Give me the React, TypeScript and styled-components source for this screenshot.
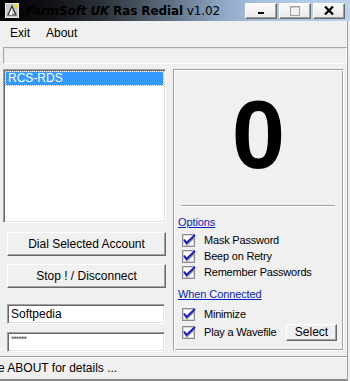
import React from 'react';
import styled, { createGlobalStyle } from 'styled-components';

const GlobalStyle = createGlobalStyle`
  html, body {
    margin: 0;
    padding: 0;
    background: #f0f0f0;
  }
`;

const Window = styled.div`
  width: 350px;
  height: 381px;
  background: #f0f0f0;
  font-family: "Liberation Sans", Arial, sans-serif;
  font-size: 11px;
  color: #000;
  display: flex;
  flex-direction: column;
  overflow: hidden;
`;

const TitleBar = styled.div`
  height: 21px;
  flex: none;
  display: flex;
  align-items: center;
  padding: 0 5px 0 5px;
  background: linear-gradient(90deg, #000 0%, #111316 15%, #2e343c 30%, #5d6d80 48%, #8ba3be 62%, #a9c3df 74%, #bad2ec 100%);
`;

const TitleText = styled.div`
  margin-left: 7px;
  flex: 1;
  font-family: "DejaVu Sans", Tahoma, sans-serif;
  font-size: 12px;
  color: #000;
  white-space: nowrap;
  letter-spacing: -0.1px;
`;

const Brand = styled.span`
  font-weight: bold;
  font-style: italic;
`;

const AppName = styled.span`
  font-weight: bold;
`;

const CaptionButtons = styled.div`
  display: flex;
  gap: 2px;
`;

const CaptionButton = styled.div<{ $disabled?: boolean }>`
  width: 32px;
  height: 16px;
  box-sizing: border-box;
  background: linear-gradient(#fbfbfb, #e8e8e8);
  border: 1px solid;
  border-color: #fff #6a6a6a #6a6a6a #fff;
  box-shadow: inset -1px -1px 0 #a0a0a0;
  display: flex;
  align-items: center;
  justify-content: center;
  color: ${(p) => (p.$disabled ? '#a0a0a0' : '#000')};
`;

const Client = styled.div`
  flex: 1;
  min-height: 0;
  display: flex;
  flex-direction: column;
  margin-right: 2px;
  border-right: 1px solid #a0a0a0;
`;

const MenuBar = styled.div`
  height: 24px;
  flex: none;
  display: flex;
  align-items: center;
  padding-left: 2px;
  font-size: 12px;
`;

const MenuItem = styled.span`
  padding: 0 8px;
`;

const TopStrip = styled.div`
  height: 15px;
  flex: none;
  margin: 2px 0 0 3px;
  border: 1px solid;
  border-color: #a8a8a8 #fff #fff #a8a8a8;
  box-shadow: inset 1px 1px 0 #e3e3e3;
`;

const Body = styled.div`
  flex: 1;
  min-height: 0;
  display: flex;
  padding: 5px 2px 0 3px;
  gap: 7px;
`;

const LeftColumn = styled.div`
  width: 163px;
  display: flex;
  flex-direction: column;
`;

const ListBox = styled.div`
  height: 154px;
  flex: none;
  box-sizing: border-box;
  background: #fff;
  border: 1px solid;
  border-color: #a0a0a0 #fff #fff #a0a0a0;
  box-shadow: inset 1px 1px 0 #696969, inset -1px -1px 0 #e3e3e3;
  padding: 2px;
`;

const ListItem = styled.div<{ $selected?: boolean }>`
  height: 13px;
  line-height: 13px;
  padding-left: 2px;
  font-size: 12px;
  background: ${(p) => (p.$selected ? '#3399ff' : 'transparent')};
  color: ${(p) => (p.$selected ? '#fff' : '#000')};
  outline: ${(p) => (p.$selected ? '1px dotted #e0a060' : 'none')};
`;

const PushButton = styled.div<{ $top: number }>`
  margin: ${(p) => p.$top}px 0 0 4px;
  width: 159px;
  height: 24px;
  flex: none;
  box-sizing: border-box;
  border: 1px solid;
  border-color: #fff #696969 #696969 #fff;
  box-shadow: inset -1px -1px 0 #a0a0a0;
  display: flex;
  align-items: center;
  justify-content: center;
  font-size: 12px;
`;

const TextBox = styled.div<{ $top: number; $small?: boolean }>`
  margin: ${(p) => p.$top}px 0 0 4px;
  width: 158px;
  height: 20px;
  flex: none;
  box-sizing: border-box;
  background: #fff;
  border: 1px solid;
  border-color: #a0a0a0 #fff #fff #a0a0a0;
  box-shadow: inset 1px 1px 0 #696969, inset -1px -1px 0 #e3e3e3;
  padding: 2px 3px;
  font-size: ${(p) => (p.$small ? '9px' : '12px')};
  line-height: ${(p) => (p.$small ? '9px' : '14px')};
  color: ${(p) => (p.$small ? '#555' : '#000')};
  letter-spacing: ${(p) => (p.$small ? '-1px' : '0')};
`;

const RightPanel = styled.div`
  width: 171px;
  height: 282px;
  box-sizing: border-box;
  border: 1px solid;
  border-color: #a0a0a0 #fff #fff #a0a0a0;
  box-shadow: inset 1px 1px 0 #fff, inset -1px -1px 0 #a0a0a0;
  display: flex;
  flex-direction: column;
`;

const Counter = styled.div`
  height: 135px;
  display: flex;
  align-items: center;
  justify-content: center;
  font-family: "Liberation Sans", Arial, sans-serif;
  font-weight: bold;
  font-size: 96px;
  line-height: 1;
  padding-bottom: 6px;
  box-sizing: border-box;
`;

const Divider = styled.div`
  margin: 0 8px 0 7px;
  height: 0;
  border-top: 1px solid #a0a0a0;
  border-bottom: 1px solid #fff;
`;

const Section = styled.div`
  padding-left: 4px;
  display: flex;
  flex-direction: column;
`;

const SectionLink = styled.span<{ $top: number }>`
  margin-top: ${(p) => p.$top}px;
  font-size: 11px;
  color: #0a24b8;
  text-decoration: underline;
  line-height: 14px;
  letter-spacing: -0.1px;
`;

const CheckRow = styled.div<{ $top?: number }>`
  display: flex;
  align-items: center;
  height: 16px;
  margin-top: ${(p) => p.$top ?? 0}px;
  padding-left: 4px;
  font-size: 11px;
  letter-spacing: -0.2px;
  white-space: nowrap;
  gap: 8px;
`;

const SmallButton = styled.div`
  margin-left: auto;
  margin-right: 6px;
  width: 51px;
  height: 17px;
  box-sizing: border-box;
  border: 1px solid;
  border-color: #fff #696969 #696969 #fff;
  box-shadow: inset -1px -1px 0 #a0a0a0;
  display: flex;
  align-items: center;
  justify-content: center;
  font-size: 12px;
  letter-spacing: 0;
`;

const StatusBar = styled.div`
  height: 25px;
  flex: none;
  box-sizing: border-box;
  margin-top: 4px;
  border-top: 1px solid #a0a0a0;
  border-bottom: 2px solid #8a8a8a;
  box-shadow: inset 0 1px 0 #fff;
  display: flex;
  align-items: center;
  font-size: 12px;
  white-space: nowrap;
  text-indent: -2px;
  overflow: hidden;
`;

const AppIcon = () => (
  <svg width="14" height="15" viewBox="0 0 14 15">
    <rect x="0.5" y="0.5" width="13" height="14" fill="#c8c8c8" stroke="#e8e8e8" />
    <path d="M3 12 L7 3 L11 12 Z" fill="none" stroke="#333" strokeWidth="1.2" />
    <path d="M4 12 L7 5 L7 12 Z" fill="#fff" />
    <circle cx="11.5" cy="2.5" r="2" fill="#f5e400" />
  </svg>
);

const CheckBox = () => (
  <svg width="14" height="13" viewBox="0 0 14 13">
    <rect x="0.5" y="0.5" width="12" height="12" fill="#fff" stroke="#8a8a8a" />
    <rect x="1.5" y="1.5" width="10" height="10" fill="none" stroke="#d8d8d8" />
    <path d="M2.5 6.5 L5 10.5 L12.5 3" fill="none" stroke="#9a9a9a" strokeWidth="2" />
    <path d="M2 5.5 L4.5 9 L13 1" fill="none" stroke="#1c1ccc" strokeWidth="1.9" />
  </svg>
);

type Option = { label: string };

const options: Option[] = [
  { label: 'Mask Password' },
  { label: 'Beep on Retry' },
  { label: 'Remember Passwords' },
];

const App: React.FC = () => (
  <>
    <GlobalStyle />
    <Window>
      <TitleBar>
        <AppIcon />
        <TitleText>
          <Brand>FarmSoft UK</Brand> <AppName>Ras Redial</AppName> v1.02
        </TitleText>
        <CaptionButtons>
          <CaptionButton>
            <svg width="8" height="8" viewBox="0 0 8 8">
              <rect x="1" y="5" width="6" height="2" fill="#000" />
            </svg>
          </CaptionButton>
          <CaptionButton $disabled>
            <svg width="10" height="10" viewBox="0 0 10 10">
              <rect x="0.5" y="0.5" width="9" height="9" fill="none" stroke="#a0a0a0" />
              <rect x="0.5" y="0.5" width="9" height="1" fill="#a0a0a0" />
            </svg>
          </CaptionButton>
          <CaptionButton>
            <svg width="10" height="9" viewBox="0 0 10 9">
              <path d="M1 0.5 L9 8.5 M9 0.5 L1 8.5" stroke="#000" strokeWidth="2.2" />
            </svg>
          </CaptionButton>
        </CaptionButtons>
      </TitleBar>

      <Client>
        <MenuBar>
          <MenuItem>Exit</MenuItem>
          <MenuItem>About</MenuItem>
        </MenuBar>

        <TopStrip />

        <Body>
          <LeftColumn>
            <ListBox>
              <ListItem $selected>RCS-RDS</ListItem>
            </ListBox>
            <PushButton $top={9}>Dial Selected Account</PushButton>
            <PushButton $top={8}>Stop ! / Disconnect</PushButton>
            <TextBox $top={16}>Softpedia</TextBox>
            <TextBox $top={8} $small>
              ******
            </TextBox>
          </LeftColumn>

          <RightPanel>
            <Counter>0</Counter>
            <Divider />
            <Section>
              <SectionLink $top={8}>Options</SectionLink>
              {options.map((o, i) => (
                <CheckRow key={o.label} $top={i === 0 ? 3 : 0}>
                  <CheckBox />
                  {o.label}
                </CheckRow>
              ))}
              <SectionLink $top={7}>When Connected</SectionLink>
              <CheckRow $top={5}>
                <CheckBox />
                Minimize
              </CheckRow>
              <CheckRow $top={2}>
                <CheckBox />
                Play a Wavefile
                <SmallButton>Select</SmallButton>
              </CheckRow>
            </Section>
          </RightPanel>
        </Body>

        <StatusBar>e ABOUT for details ...</StatusBar>
      </Client>
    </Window>
  </>
);

export default App;
